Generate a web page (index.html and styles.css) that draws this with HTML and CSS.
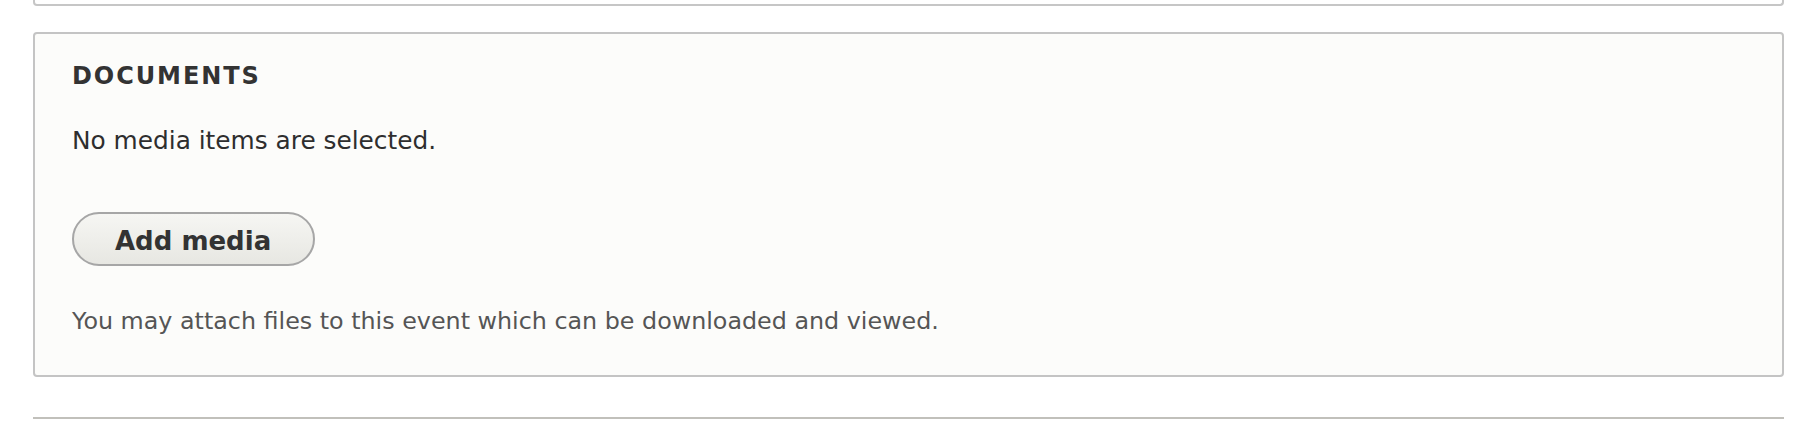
FILE: index.html
```html
<!DOCTYPE html>
<html lang="en">
<head>
<meta charset="utf-8">
<title>Documents</title>
<link rel="stylesheet" href="styles.css">
</head>
<body>
<div class="page">
  <div class="prev-box"></div>
  <section class="fieldset">
    <h2 class="fieldset-title">Documents</h2>
    <p class="empty">No media items are selected.</p>
    <button class="button" type="button">Add media</button>
    <p class="description">You may attach files to this event which can be downloaded and viewed.</p>
  </section>
  <hr class="rule">
</div>
</body>
</html>
```
FILE: styles.css
```css
* { box-sizing: border-box; }
html, body { margin: 0; padding: 0; background: #ffffff; }
body {
  font-family: "DejaVu Sans", "Liberation Sans", sans-serif;
  color: #333333;
}
.page {
  padding: 0 34px 0 33px;
}
.prev-box {
  height: 6px;
  border: 2px solid #c6c6c6;
  border-top: 0;
  border-radius: 0 0 4px 4px;
}
.fieldset {
  margin: 26px 0 0 0;
  padding: 24px 38px 36px 37px;
  background: #fcfcfa;
  border: 2px solid #c4c4c4;
  border-radius: 4px;
  display: flex;
  flex-direction: column;
  align-items: flex-start;
}
.fieldset-title {
  margin: 0;
  font-size: 24px;
  line-height: 36px;
  font-weight: bold;
  text-transform: uppercase;
  letter-spacing: 0.08em;
  color: #333333;
}
.empty {
  margin: 29px 0 0 0;
  font-size: 24.8px;
  line-height: 36px;
  color: #2e2e2e;
}
.button {
  margin: 53px 0 0 0;
  height: 54px;
  padding: 4px 42px 0 41px;
  font-family: "DejaVu Sans", "Liberation Sans", sans-serif;
  font-size: 26px;
  font-weight: bold;
  line-height: 46px;
  color: #333333;
  background: linear-gradient(to bottom, #f6f6f3 0%, #e7e7e2 100%);
  border: 2px solid #a6a6a6;
  border-radius: 30px;
}
.description {
  margin: 37px 0 0 0;
  font-size: 23.8px;
  line-height: 36px;
  color: #555555;
}
.rule {
  margin: 40px 0 0 0;
  height: 2px;
  border: 0;
  background: #c1c0bb;
}
```
